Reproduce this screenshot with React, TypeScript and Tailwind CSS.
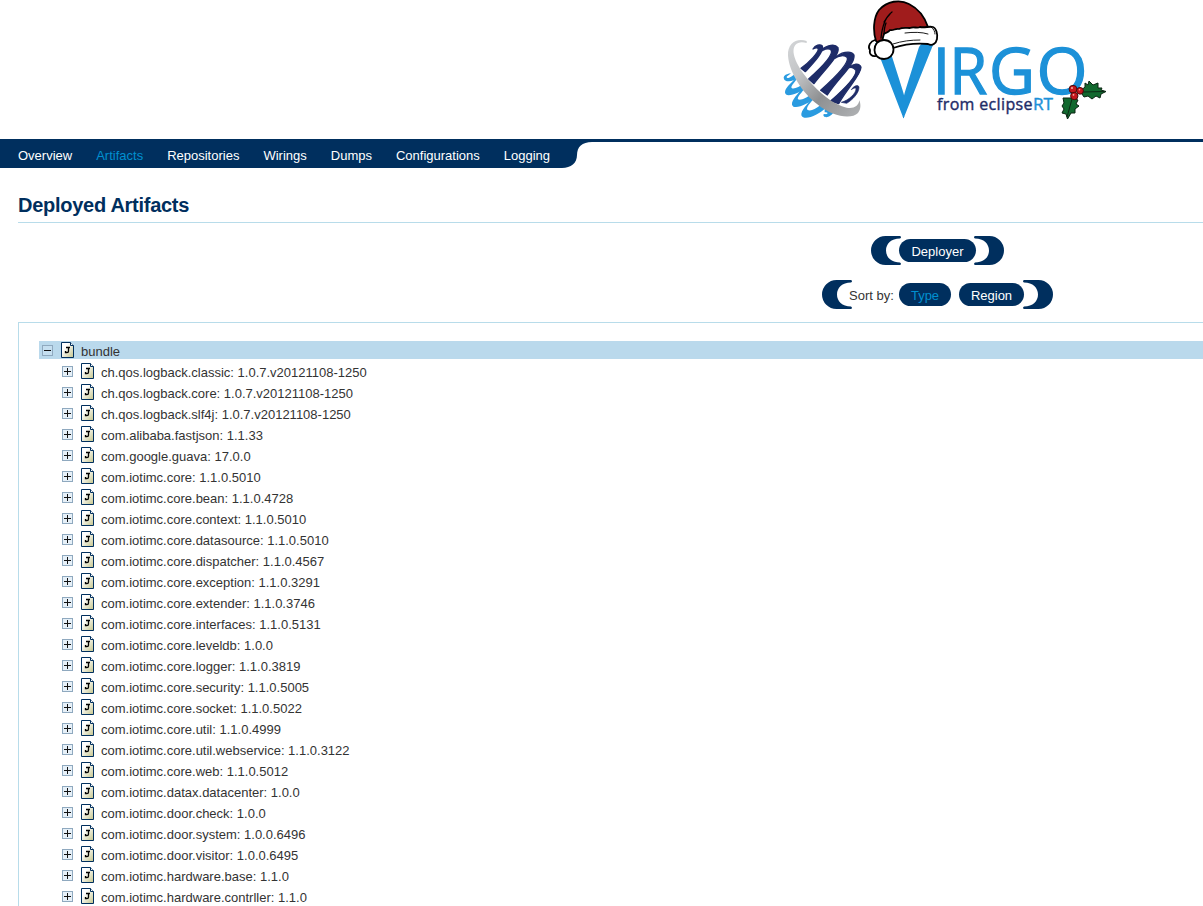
import React from "react";

const NAV = ["Overview", "Artifacts", "Repositories", "Wirings", "Dumps", "Configurations", "Logging"];

const BUNDLES = [
  "ch.qos.logback.classic: 1.0.7.v20121108-1250",
  "ch.qos.logback.core: 1.0.7.v20121108-1250",
  "ch.qos.logback.slf4j: 1.0.7.v20121108-1250",
  "com.alibaba.fastjson: 1.1.33",
  "com.google.guava: 17.0.0",
  "com.iotimc.core: 1.1.0.5010",
  "com.iotimc.core.bean: 1.1.0.4728",
  "com.iotimc.core.context: 1.1.0.5010",
  "com.iotimc.core.datasource: 1.1.0.5010",
  "com.iotimc.core.dispatcher: 1.1.0.4567",
  "com.iotimc.core.exception: 1.1.0.3291",
  "com.iotimc.core.extender: 1.1.0.3746",
  "com.iotimc.core.interfaces: 1.1.0.5131",
  "com.iotimc.core.leveldb: 1.0.0",
  "com.iotimc.core.logger: 1.1.0.3819",
  "com.iotimc.core.security: 1.1.0.5005",
  "com.iotimc.core.socket: 1.1.0.5022",
  "com.iotimc.core.util: 1.1.0.4999",
  "com.iotimc.core.util.webservice: 1.1.0.3122",
  "com.iotimc.core.web: 1.1.0.5012",
  "com.iotimc.datax.datacenter: 1.0.0",
  "com.iotimc.door.check: 1.0.0",
  "com.iotimc.door.system: 1.0.0.6496",
  "com.iotimc.door.visitor: 1.0.0.6495",
  "com.iotimc.hardware.base: 1.1.0",
  "com.iotimc.hardware.contrller: 1.1.0",
];

function Logo() {
  return (
    <svg width="330" height="125" viewBox="780 0 330 125" className="block shrink-0">
      <defs>
        <linearGradient id="ring" x1="0" y1="0" x2="1" y2="1">
          <stop offset="0" stopColor="#d4d6d8" />
          <stop offset="0.3" stopColor="#c2c4c6" />
          <stop offset="0.6" stopColor="#8e9092" />
          <stop offset="1" stopColor="#b0b2b4" />
        </linearGradient>
        <clipPath id="wedge">
          <path d="M860 30H939L903.5 118.5L869.5 30Z" />
        </clipPath>
      </defs>
      <g transform="translate(780 35) scale(0.3333)">
        {/* light blue coils below the ring */}
        <g fill="#2a9be0">
          <path d="M11 128C13 118 22 118 32 114C28 122 20 122 20 127C21 134 36 124 46 116L52 130C40 140 12 144 11 128Z" />
          <path d="M52 130C42 145 30 156 36 160C44 163 60 154 70 147L80 158C60 172 16 192 15 172C15 158 32 146 42 134Z" />
          <path d="M78 156C66 172 50 186 54 193C62 198 80 188 94 178L106 190C84 206 42 228 36 209C34 194 56 176 66 160Z" />
          <path d="M104 188C92 202 78 216 82 224C90 230 104 224 122 210L136 220C116 240 72 260 64 241C62 226 84 206 94 192Z" />
          <path d="M134 219C140 218 152 224 162 230C156 242 138 252 131 243C128 238 132 236 138 238C144 236 146 232 134 232Z" />
        </g>
        {/* navy coils above the ring */}
        <g fill="#1e2c68" stroke="#1e2c68" strokeWidth="4" strokeLinejoin="round">
          <path d="M99 42C106 30 120 26 127 33C133 50 100 84 76 110L63 100C90 80 116 52 115 41C112 36 106 38 99 42Z" />
          <path d="M116 54C130 35 162 22 174 38C180 62 134 104 102 146L86 132C122 100 160 62 154 46C146 36 128 44 116 54Z" />
          <path d="M164 70C180 52 212 44 222 60C226 88 174 130 142 180L122 166C158 134 208 88 202 68C194 58 176 62 164 70Z" />
          <path d="M208 98C218 86 238 82 243 97C242 122 204 156 176 206L152 198C184 170 230 126 228 106C222 98 214 96 208 98Z" />
          <path d="M214 164C222 152 234 148 237 156C238 174 216 196 200 205L184 202C206 196 230 174 228 160C224 158 220 160 214 164Z" strokeWidth="2" />
        </g>
        {/* tilted ring */}
        <path
          fillRule="evenodd"
          fill="url(#ring)"
          d="M80 18C50 8 22 24 24 62C28 112 66 172 112 208C158 246 214 254 234 234C244 222 242 206 238 196C236 214 220 222 200 218C164 210 116 174 80 128C46 86 32 48 46 30C54 20 68 20 80 24Z"
        />
      </g>
      {/* wordmark */}
      <g fill="#1c91d8" fontFamily="'Open Sans', sans-serif">
        <g clipPath="url(#wedge)">
          <text x="874" y="118" fontFamily="Lato, sans-serif" fontSize="101" fontWeight="900" stroke="#1c91d8" strokeWidth="3" textLength="60" lengthAdjust="spacingAndGlyphs">V</text>
        </g>
        <g fontSize="64" stroke="#1c91d8" strokeWidth="1.3">
          <text x="932.5" y="94">I</text>
          <text x="949.3" y="94" textLength="38" lengthAdjust="spacingAndGlyphs">R</text>
          <text x="989" y="94" textLength="46" lengthAdjust="spacingAndGlyphs">G</text>
          <text x="1036.5" y="94" textLength="51" lengthAdjust="spacingAndGlyphs">O</text>
        </g>
      </g>
      <text x="937" y="110" fontFamily="'Open Sans', sans-serif" fontSize="16" fill="#1e2c68" stroke="#1e2c68" strokeWidth="0.4" textLength="95.5" lengthAdjust="spacing">from eclipse</text>
      <text x="1033" y="110" fontFamily="'Open Sans', sans-serif" fontSize="16" fill="#1c91d8" stroke="#1c91d8" strokeWidth="0.4" textLength="20" lengthAdjust="spacingAndGlyphs">RT</text>
      {/* santa hat */}
      <g stroke="#000" strokeWidth="1.8" strokeLinejoin="round" strokeLinecap="round">
        <path d="M876 41C873 32 873 18 879 10C887 1 900 -1 909 4C919 9 925 18 928 27L884 39C882 42 879 44 876 41Z" fill="#a01c1c" />
        <path d="M881 38C882 28 884 18 892 12M884 22C887 17 889 15 890 14M886 23C884 28 884 33 884 36" fill="none" strokeWidth="1.3" />
        <path d="M884 34C886 32 888 33 890 30C894 31 895 28 899 29C903 27 906 28 910 28C914 26 917 29 920 27C925 28 929 26 933 27C936 28 938 34 937 39C936 44 932 46 928 44C917 43 905 44 893 48C886 50 880 45 884 34Z" fill="#fff" />
        <path d="M905 33C913 32 922 32 928 34M893 44C902 41 911 40 920 40M931 27C934 29 935 32 935 34" fill="none" strokeWidth="0.9" />
        <path d="M875 40C871 41 867 46 870 50C869 54 872 57 876 56" fill="#fff" />
        <path d="M884 40C890 40 893.5 44.5 893.5 49.5C893.5 55 889 59 884 59C878 59 874.5 55 874.5 50C874.5 44.5 878 40 884 40Z" fill="#fff" />
      </g>
      {/* holly */}
      <g stroke="#0a2412" strokeWidth="1" strokeLinejoin="round" fill="#12692f">
        <path d="M1079 92L1085 87L1085 83L1088 85L1089 81L1093 85L1098 83L1098 88L1102 88L1101 90L1106 91.5L1101 94L1100 98L1096 96L1092 99L1088 96L1084 97L1082 94Z" />
        <path d="M1073 98L1078 100L1076 104L1079 106L1075 109L1075 113L1071 113L1067.5 119L1066 114L1062 113L1064 109L1062 106L1064 103L1063 98L1068 98Z" />
        <path d="M1083 92L1104 91.5M1072 99L1067 117" fill="none" strokeWidth="0.9" />
      </g>
      <g fill="#c4161c" stroke="#3c0808" strokeWidth="0.9">
        <circle cx="1073" cy="89.2" r="3.9" />
        <circle cx="1080" cy="90.8" r="3.4" />
        <circle cx="1074.3" cy="96" r="3.7" />
      </g>
      <g fill="#f4b0a8">
        <circle cx="1072" cy="88" r="1" />
        <circle cx="1079.5" cy="89.8" r="0.8" />
        <circle cx="1073.5" cy="94.8" r="0.9" />
      </g>
    </svg>
  );
}

function Bracket({ right = false }: { right?: boolean }) {
  return (
    <svg width="30" height="29" viewBox="0 0 30 29" className={right ? "block shrink-0 -scale-x-100" : "block shrink-0"}>
      <path fill="#002f5e" d="M29 0H14.5A14.5 14.5 0 0 0 14.5 29H29Q31 28 29 26.5C20 26.5 15 21 15 14.5S20 2.5 29 2.5Q31 1 29 0Z" />
    </svg>
  );
}

function Pill({ label, active = false, className }: { label: string; active?: boolean; className: string }) {
  return (
    <button className={`relative flex h-[23px] items-center justify-center rounded-full bg-[#002f5e] pt-[3px] ${active ? "text-[#0090d0]" : "text-white"} ${className}`}>
      {label}
    </button>
  );
}

function Toggle({ open = false }: { open?: boolean }) {
  return (
    <svg width="11" height="11" viewBox="0 0 11 11" className="block shrink-0" shapeRendering="crispEdges">
      <rect x="0.5" y="0.5" width="10" height="10" fill={open ? "#c5dff0" : "#e6f0f8"} stroke="#8fa9bf" />
      <path d={open ? "M2 5.5H9" : "M2 5.5H9M5.5 2V9"} stroke="#111" strokeWidth="1" />
    </svg>
  );
}

function FileIcon() {
  return (
    <svg width="13" height="16" viewBox="0 0 13 16" className="block shrink-0">
      <defs>
        <linearGradient id="paper" x1="0" y1="0" x2="1" y2="1">
          <stop offset="0.3" stopColor="#ffffff" />
          <stop offset="1" stopColor="#c4c48a" />
        </linearGradient>
      </defs>
      <path d="M0.5 0.5H9.5L12.5 3.5V15.5H0.5Z" fill="url(#paper)" stroke="#002f5e" />
      <path d="M9.5 0.5V3.5H12.5" fill="#fff" stroke="#002f5e" />
      <path d="M5 5.5H9M7.5 5V9.3Q7.5 10.5 6 10.5H4.5V9" fill="none" stroke="#000" strokeWidth="1.3" />
    </svg>
  );
}

export default function App() {
  return (
    <div className="h-[906px] w-full overflow-hidden bg-white font-['Liberation_Sans',Arial,sans-serif] text-[13px] leading-[18px] text-[#333]">
      <header className="flex h-[139px] pl-[780px]">
        <Logo />
      </header>

      <nav className="flex h-[29px] items-start">
        <ul className="flex h-full w-[562px] shrink-0 items-center gap-6 bg-[#002f5e] pt-[5px] pl-[18px]">
          {NAV.map((item) => (
            <li key={item} className={item === "Artifacts" ? "text-[#0090d0]" : "text-white"}>
              {item}
            </li>
          ))}
        </ul>
        <svg width="30" height="29" viewBox="0 0 30 29" className="block shrink-0">
          <path d="M0 0H30V3C20 3 15 8 15 16C15 24 9 29 0 29Z" fill="#002f5e" />
        </svg>
        <div className="h-[3px] grow bg-[#002f5e]" />
      </nav>

      <main className="ml-[18px] w-[1839px]">
        <h1 className="h-[55px] border-b border-[#b8dcea] pt-[25px] text-[20px] leading-6 font-bold tracking-[-0.27px] text-[#002f5e]">
          Deployed Artifacts
        </h1>

        <div className="mt-[13px] flex h-[29px] items-center justify-center">
          <Bracket />
          <Pill label="Deployer" className="-mx-[2px] w-[77px]" />
          <Bracket right />
        </div>
        <div className="mt-[15px] flex h-[29px] items-center justify-center">
          <Bracket />
          <span className="relative -ml-[3px] w-[50px] pt-[3px]">Sort by:</span>
          <Pill label="Type" active className="w-[52px]" />
          <Pill label="Region" className="-mr-px ml-2 w-[65px]" />
          <Bracket right />
        </div>

        <section className="mt-[13px] h-[640px] border border-[#b8dcea] pt-[18px] pl-5">
          <div className="flex h-[18px] items-center bg-[#bad9ec] pl-[3px]">
            <Toggle open />
            <span className="ml-2 flex"><FileIcon /></span>
            <span className="ml-[7px] pt-[3px]">bundle</span>
          </div>
          <ul>
            {BUNDLES.map((name) => (
              <li key={name} className="mt-[3px] flex h-[18px] items-center pl-[23px]">
                <Toggle />
                <span className="ml-2 flex"><FileIcon /></span>
                <span className="ml-[7px] pt-[3px]">{name}</span>
              </li>
            ))}
          </ul>
        </section>
      </main>
    </div>
  );
}
